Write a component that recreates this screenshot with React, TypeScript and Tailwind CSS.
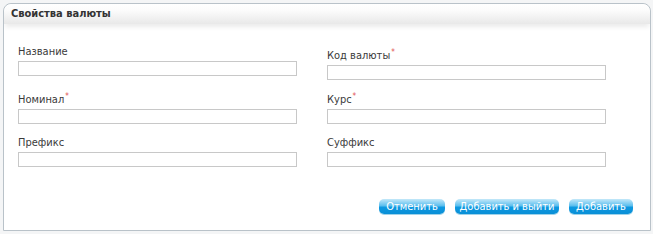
const font = { fontFamily: '"DejaVu Sans Condensed", "DejaVu Sans", Tahoma, sans-serif' };

function Field({ label, required, lower }: { label: string; required?: boolean; lower?: boolean }) {
  return (
    <div className={lower ? "pt-[4px]" : ""}>
      <div className="h-[14px] text-[11px] leading-[14px] text-[#3a3a3a]">
        {label}
        {required && <sup className="ml-[1px] text-[8px] text-[#e05050]">*</sup>}
      </div>
      <input
        type="text"
        className="mt-[2px] block h-[15px] w-[279px] border border-[#c8c8c8] bg-white outline-none"
      />
    </div>
  );
}

function Btn({ children, w }: { children: string; w: string }) {
  return (
    <button
      className={`h-[15px] ${w} whitespace-nowrap rounded-[5px] bg-[linear-gradient(#c4e8f9_0%,#5cbfee_45%,#0d98e1_55%,#0a8fd6_100%)] text-[11px] leading-[15px] text-white shadow-[0_1px_0_#9fd3ea]`}
    >
      {children}
    </button>
  );
}

export default function App() {
  return (
    <div className="h-[234px] w-[653px] bg-[#f4f5f6] pl-[3px] pt-[3px]" style={font}>
      <div className="h-[228px] w-[648px] overflow-hidden rounded-tl-[8px] rounded-tr-[8px] border border-[#b9c2c9] bg-white">
        <div className="relative h-[20px] rounded-tl-[8px] rounded-tr-[8px] bg-[linear-gradient(#ffffff_0%,#fbfbfb_35%,#e8e8e8_100%)] pl-[7px] text-[11px] font-bold leading-[20px] text-[#333] shadow-[0_4px_5px_-1px_#ebebeb]">
          Свойства валюты
        </div>
        <div className="grid grid-cols-[309px_1fr] pl-[14px] pt-[21px]">
          <Field label="Название" />
          <Field label="Код валюты" required lower />
        </div>
        <div className="grid grid-cols-[309px_1fr] pl-[14px] pt-[13px]">
          <Field label="Номинал" required />
          <Field label="Курс" required />
        </div>
        <div className="grid grid-cols-[309px_1fr] pl-[14px] pt-[12px]">
          <Field label="Префикс" />
          <Field label="Суффикс" />
        </div>
        <div className="flex justify-end gap-[10px] pr-[17px] pt-[32px]">
          <Btn w="w-[66px]">Отменить</Btn>
          <Btn w="w-[104px]">Добавить и выйти</Btn>
          <Btn w="w-[64px]">Добавить</Btn>
        </div>
      </div>
    </div>
  );
}
